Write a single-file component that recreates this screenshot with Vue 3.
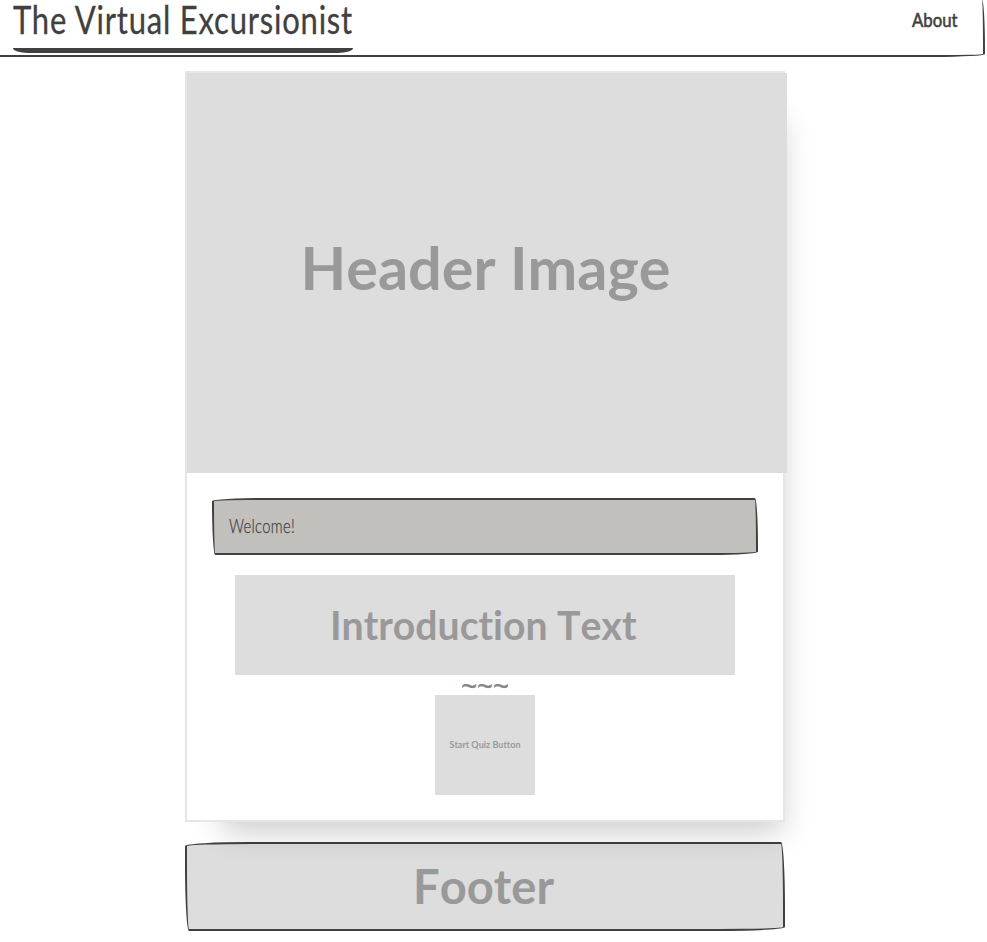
<script setup>
const images = {
  header: { w: 600, h: 400, x: 113.5, y: 217, size: 59.5, len: 370, label: 'Header Image' },
  intro: { w: 500, h: 100, x: 95, y: 64.5, size: 39.5, len: 306.5, label: 'Introduction Text' },
  start: { w: 100, h: 100, x: 14.5, y: 53, size: 9.5, len: 71, label: 'Start Quiz Button' },
}
</script>

<template>
  <div class="page">
    <nav class="navbar">
      <a class="brand">
        <svg width="340" height="48"><text x="0" y="34" font-size="39" textLength="340" lengthAdjust="spacingAndGlyphs">The Virtual Excursionist</text></svg>
      </a>
      <a class="about">
        <svg width="46" height="40"><text x="1" y="27" font-size="19.5" textLength="45.5" lengthAdjust="spacingAndGlyphs">About</text></svg>
      </a>
    </nav>

    <main class="paper">
      <svg class="picture hero" :width="images.header.w" :height="images.header.h">
        <text :x="images.header.x" :y="images.header.y" :font-size="images.header.size" :textLength="images.header.len" lengthAdjust="spacingAndGlyphs">{{ images.header.label }}</text>
      </svg>
      <div class="welcome sketch">
        <svg width="68" height="30"><text x="0" y="18" font-size="19.5" textLength="66" lengthAdjust="spacingAndGlyphs">Welcome!</text></svg>
      </div>
      <svg class="picture" :width="images.intro.w" :height="images.intro.h">
        <text :x="images.intro.x" :y="images.intro.y" :font-size="images.intro.size" :textLength="images.intro.len" lengthAdjust="spacingAndGlyphs">{{ images.intro.label }}</text>
      </svg>
      <div class="divider">~~~</div>
      <svg class="picture" :width="images.start.w" :height="images.start.h">
        <text :x="images.start.x" :y="images.start.y" :font-size="images.start.size" :textLength="images.start.len" lengthAdjust="spacingAndGlyphs">{{ images.start.label }}</text>
      </svg>
    </main>

    <footer class="footer sketch">
      <svg class="picture" width="140" height="85"><text x="-2" y="59.5" font-size="47.5" textLength="141" lengthAdjust="spacingAndGlyphs">Footer</text></svg>
    </footer>
  </div>
</template>

<style>
body { margin: 0; background: #fff; }
</style>

<style scoped>
.page {
  height: 942px;
  overflow: hidden;
  font-family: Lato, "Liberation Sans", sans-serif;
  font-variant-ligatures: none;
  color: #41403e;
}
.page * { box-sizing: border-box; }
svg { display: block; flex: none; overflow: visible; }
.navbar {
  display: flex;
  justify-content: space-between;
  width: 985px;
  height: 57px;
  padding: 0 26px 0 13px;
  border: solid #41403e;
  border-width: 0 2px 2px 0;
  border-top-right-radius: 3px 50px;
  border-bottom-right-radius: 50px 3px;
}
.brand {
  width: 340px;
  height: 53px;
  border-bottom: 5px solid #41403e;
  border-bottom-left-radius: 15px 5px;
  border-bottom-right-radius: 15px 5px;
}
.brand text, .about text { fill: #41403e; }
.brand text { letter-spacing: 1px; stroke: #41403e; stroke-width: 0.3px; }
.about text { stroke: #41403e; stroke-width: 0.6px; }
.paper {
  position: relative;
  z-index: 1;
  display: flex;
  flex-direction: column;
  align-items: center;
  width: 600px;
  height: 751px;
  margin: 14px 0 0 185px;
  border: 2px solid #e6e6e6;
  background: #fff;
  box-shadow: 17px 30px 29px -20px rgba(0, 0, 0, 0.2);
}
.picture { background: #ddd; }
.picture text { fill: #999; font-weight: 700; font-kerning: none; }
.hero { align-self: flex-start; }
.sketch {
  border: 2px solid #41403e;
  border-top-left-radius: 255px 15px;
  border-top-right-radius: 15px 225px;
  border-bottom-right-radius: 225px 15px;
  border-bottom-left-radius: 15px 255px;
}
.welcome {
  width: 546px;
  height: 57px;
  margin: 25px 0 20px;
  padding: 15px;
  background: #c1c0bd;
}
.welcome text { fill: #41403e; font-weight: 300; letter-spacing: 0.4px; stroke: #41403e; stroke-width: 0.25px; }
.divider {
  height: 20px;
  color: #888785;
  font-family: "Liberation Sans", sans-serif;
  font-size: 27px;
  line-height: 24px;
  -webkit-text-stroke: 0.4px #888785;
}
.footer {
  display: flex;
  justify-content: center;
  width: 600px;
  height: 89px;
  margin: 20px 0 0 185px;
  background: #ddd;
  border-top-left-radius: 66px 4px;
  border-top-right-radius: 4px 66px;
  border-bottom-right-radius: 66px 4px;
  border-bottom-left-radius: 4px 66px;
}
.footer .picture { background: transparent; }
</style>
